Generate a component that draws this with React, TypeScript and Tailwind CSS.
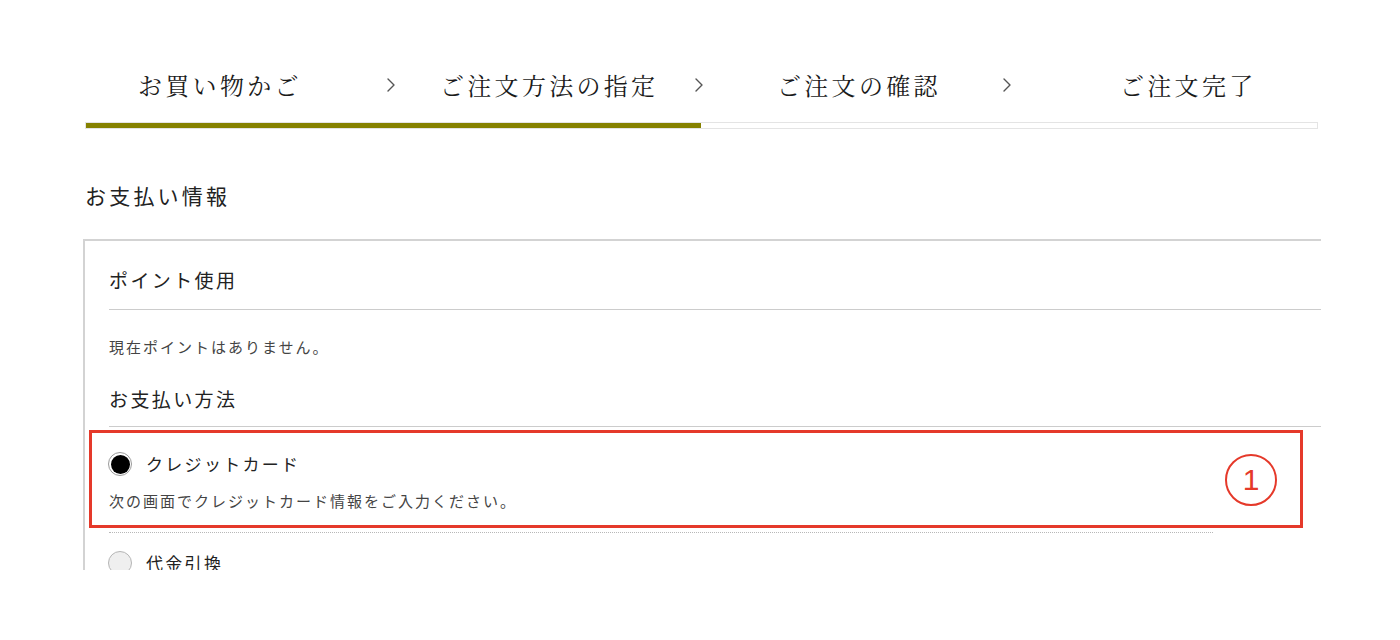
const steps = [
  { label: "お買い物かご", pad: "pl-[53px]", w: "w-[308px]" },
  { label: "ご注文方法の指定", pad: "pl-[47px]", w: "w-[308px]" },
  { label: "ご注文の確認", pad: "pl-[76px]", w: "w-[308px]" },
  { label: "ご注文完了", pad: "pl-[111px]", w: "w-[309px]" },
];

function Chevron() {
  return (
    <svg width="10" height="16" viewBox="0 0 10 16" fill="none" className="ml-auto -mr-[3px]">
      <path d="M2 2l6 6-6 6" stroke="#555" strokeWidth="1.4" strokeLinecap="round" strokeLinejoin="round" />
    </svg>
  );
}

function Radio({ checked }: { checked?: boolean }) {
  if (checked) {
    return (
      <span className="w-[24px] h-[24px] rounded-full border border-[#9a9a9a] bg-white flex items-center justify-center shrink-0">
        <span className="w-[19px] h-[19px] rounded-full bg-black" />
      </span>
    );
  }
  return <span className="w-[24px] h-[24px] rounded-full border border-[#b5b5b5] bg-[#efefef] shrink-0" />;
}

export default function App() {
  return (
    <div className="relative w-[1400px] h-[640px] bg-white overflow-hidden font-['Noto_Sans_CJK_JP',sans-serif] text-[#222]">
      <div className="h-[570px] overflow-hidden pt-[57px]">
        {/* steps */}
        <div className="ml-[85px] w-[1233px]">
          <div className="flex h-[56px]">
            {steps.map((s, i) => (
              <div key={s.label} className={`${s.w} ${s.pad} flex items-center`}>
                <span className="text-[24px] tracking-[3.3px] leading-none text-[#1a1a1a] font-['Noto_Serif_CJK_JP','Noto_Sans_CJK_JP',serif]">
                  {s.label}
                </span>
                {i < steps.length - 1 && <Chevron />}
              </div>
            ))}
          </div>
          <div className="mt-[9px] h-[7px] border border-[#e4e4e4] bg-white">
            <div className="h-full w-[615px] bg-[#858100]" />
          </div>
        </div>

        <h2 className="ml-[85px] mt-[51px] text-[21px] leading-[30px] tracking-[3.2px] font-normal">お支払い情報</h2>

        {/* payment panel */}
        <div className="ml-[83px] mt-[29px] w-[1238px] border-t-2 border-l-2 border-[#d3d3d3] pl-[24px] pt-[25px]">
          <div className="border-b border-[#cccccc] pb-[15px]">
            <h3 className="text-[19px] leading-[28px] tracking-[2.4px] font-normal">ポイント使用</h3>
          </div>
          <p className="mt-[26px] text-[15px] leading-[22px] tracking-[2px] text-[#444]">現在ポイントはありません。</p>
          <div className="mt-[27px] border-b border-[#cccccc] pb-[13px]">
            <h3 className="text-[19px] leading-[28px] tracking-[2.4px] font-normal">お支払い方法</h3>
          </div>

          <div className="w-[1104px] border-b border-dotted border-[#b8b8b8] pt-[23px] pb-[20px]">
            <label className="flex items-center h-[28px] -ml-[1px]">
              <Radio checked />
              <span className="ml-[14px] text-[17px] tracking-[2.3px] leading-[28px]">クレジットカード</span>
            </label>
            <p className="mt-[12px] text-[15px] leading-[22px] tracking-[2px] text-[#444]">
              次の画面でクレジットカード情報をご入力ください。
            </p>
          </div>

          <label className="mt-[16px] flex items-center h-[28px] -ml-[1px]">
            <Radio />
            <span className="ml-[14px] text-[17px] tracking-[2.3px] leading-[28px]">代金引換</span>
          </label>
        </div>
      </div>

      {/* annotation overlay */}
      <div className="absolute left-[89px] top-[430px] w-[1214px] h-[98px] border-[3px] border-[#e5392a]" />
      <div className="absolute left-[1225px] top-[454px] w-[52px] h-[52px] rounded-full border-2 border-[#e5392a] flex items-center justify-center">
        <span className="text-[30px] leading-none text-[#e5392a] font-['Liberation_Sans',sans-serif]">1</span>
      </div>
    </div>
  );
}
